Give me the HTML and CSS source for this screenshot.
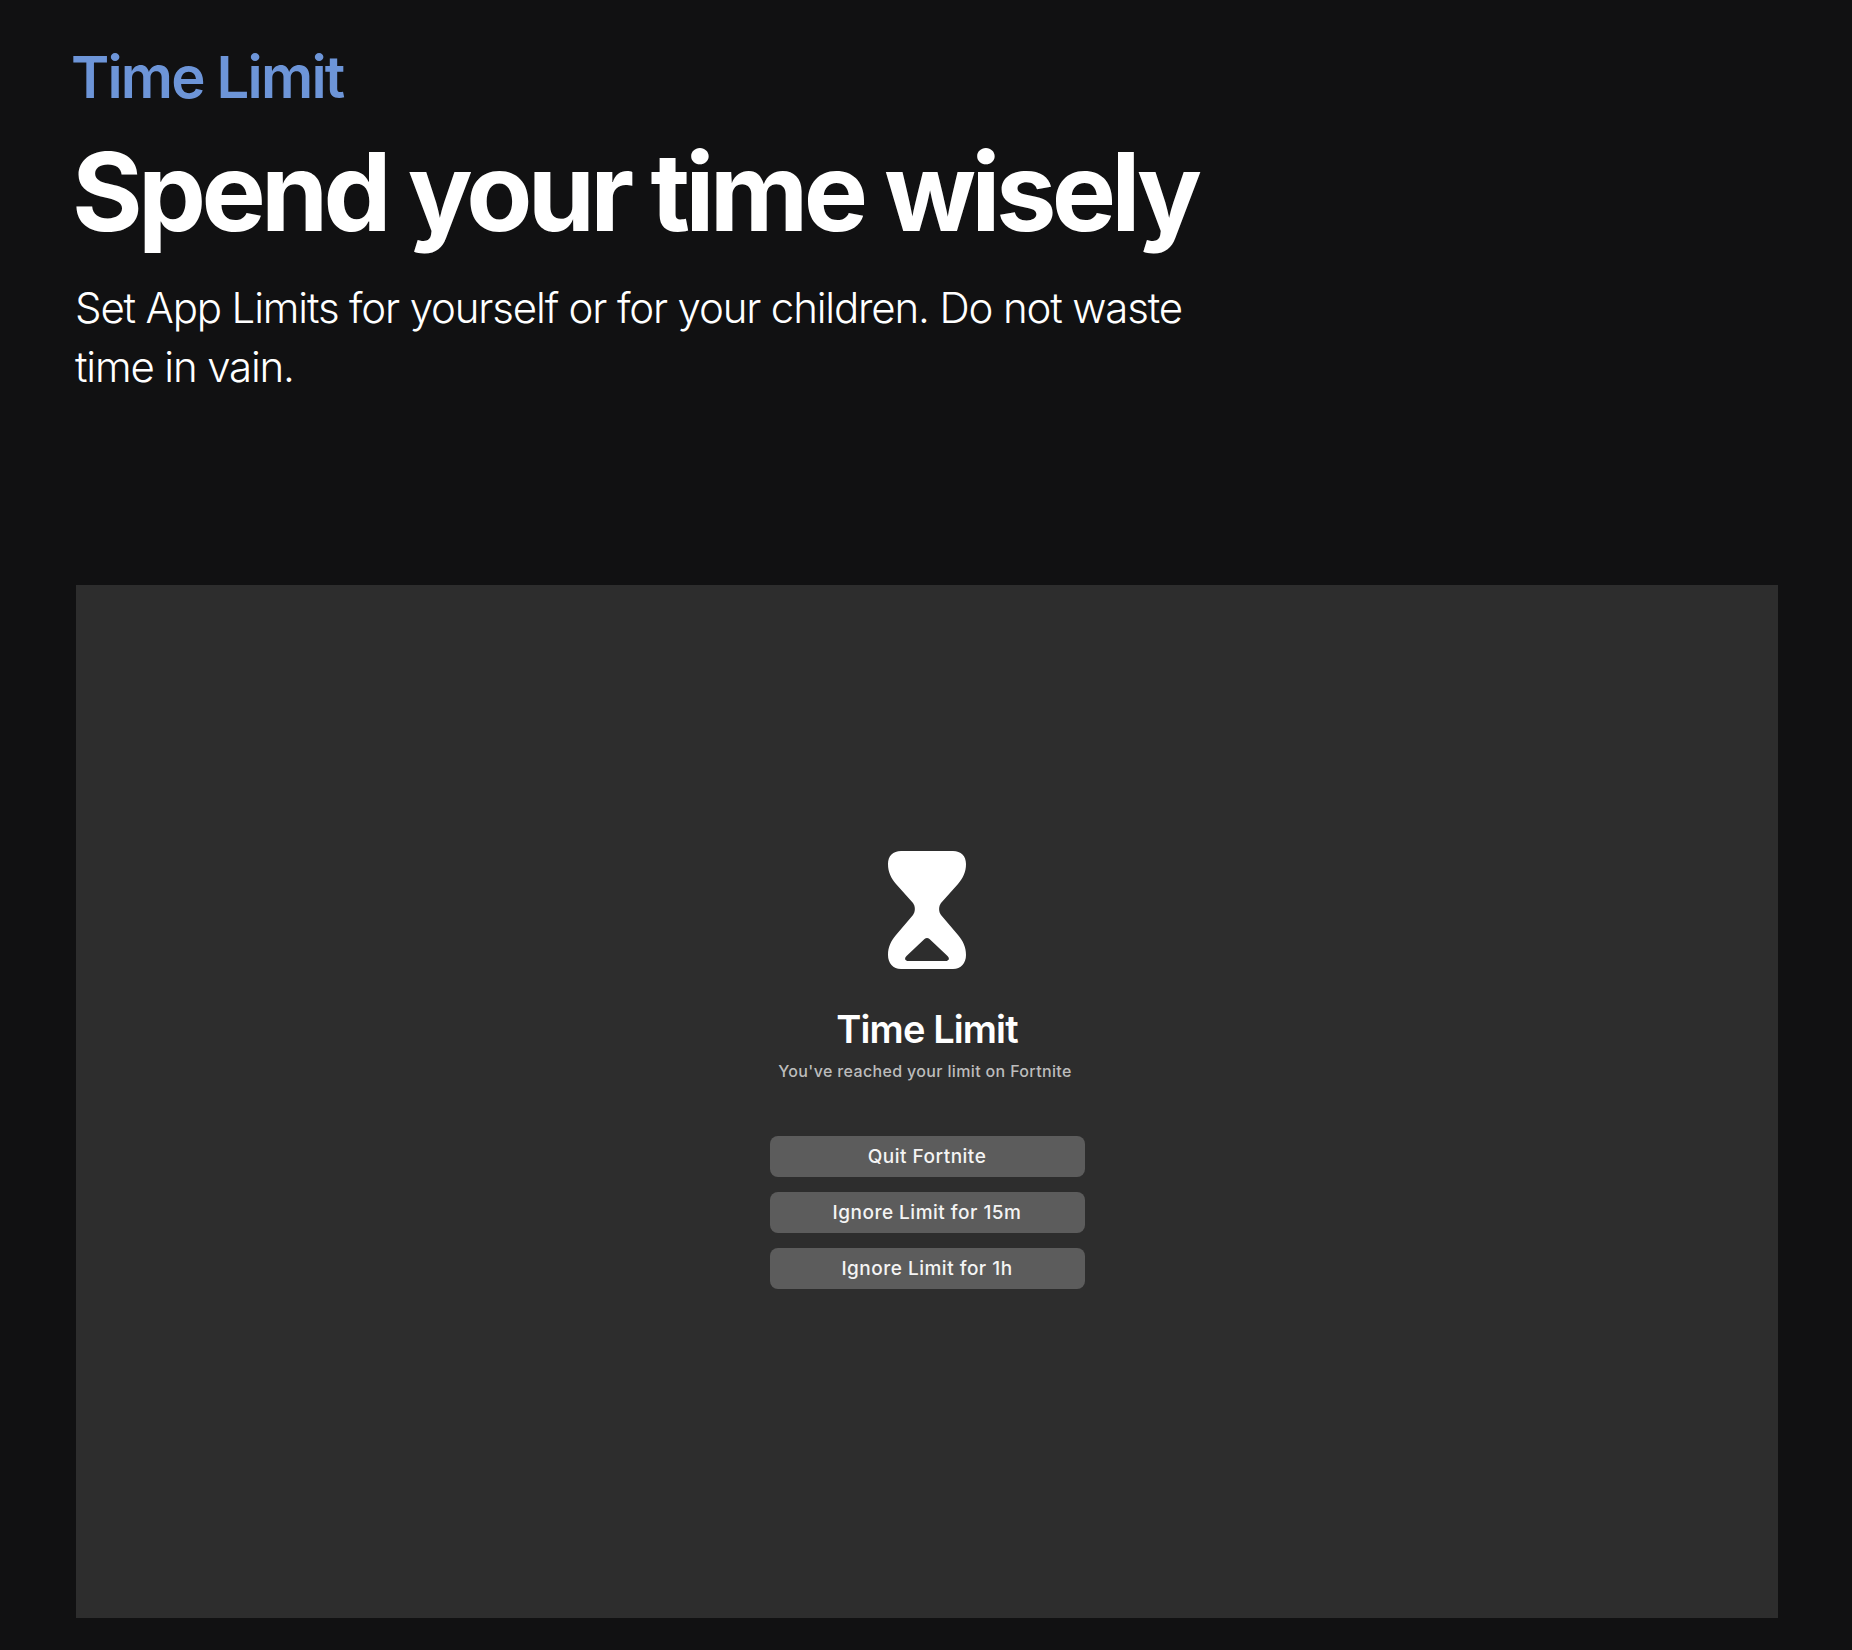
FILE: index.html
```html
<!DOCTYPE html>
<html lang="en">
<head>
<meta charset="utf-8">
<title>Time Limit</title>
<link rel="stylesheet" href="styles.css">
</head>
<body>
<main class="page">
  <header class="intro">
    <h2 class="eyebrow">Time Limit</h2>
    <h1 class="headline">Spend your time wisely</h1>
    <p class="lede">Set App Limits for yourself or for your children. Do not waste time in vain.</p>
  </header>
  <section class="panel">
    <svg class="hourglass" viewBox="0 0 78 118" aria-hidden="true">
      <path fill-rule="evenodd" d="M13 0H65C73 0 78 5 78 13C78 21 75 27 70 33L53 52C50.500 55.500 50.500 60.500 53 64L70 84C75 90 78 96 78 104C78 112 73 118 65 118H13C5 118 0 112 0 104C0 96 3 90 8 84L25 64C27.500 60.500 27.500 55.500 25 52L8 33C3 27 0 21 0 13C0 5 5 0 13 0ZM36.500 88L18.500 105C16 107.500 17 110 20.500 110H57.500C61 110 62 107.500 59.500 105L41.500 88C40 86.500 38 86.500 36.500 88Z"/>
    </svg>
    <h3 class="dialog-title">Time Limit</h3>
    <p class="dialog-text">You've reached your limit on Fortnite</p>
    <div class="actions">
      <button class="action">Quit Fortnite</button>
      <button class="action">Ignore Limit for 15m</button>
      <button class="action">Ignore Limit for 1h</button>
    </div>
  </section>
</main>
</body>
</html>
```
FILE: styles.css
```css
html, body { margin: 0; padding: 0; }
body {
  background: #111112;
  color: #fff;
  font-family: Inter, "Liberation Sans", sans-serif;
}
.page {
  height: 1650px;
  box-sizing: border-box;
  padding: 0 74px 32px 76px;
  display: flex;
  flex-direction: column;
}
.intro { height: 585px; }
.eyebrow {
  margin: 0 0 0 -5px;
  padding-top: 43px;
  font-size: 58px;
  line-height: 68px;
  font-weight: 600;
  letter-spacing: -1.800px;
  color: #6d95d8;
}
.headline {
  margin: 21px 0 0 -4px;
  font-size: 108px;
  line-height: 120px;
  font-weight: 700;
  letter-spacing: -4.700px;
}
.lede {
  margin: 26px 0 0 -1px;
  width: 1130px;
  font-size: 42px;
  line-height: 59px;
  font-weight: 300;
  letter-spacing: -1.160px;
}
.panel {
  flex: 1;
  background: #2d2d2d;
  display: flex;
  flex-direction: column;
  align-items: center;
  padding-top: 266px;
}
.hourglass { width: 78px; height: 118px; margin-right: 1px; fill: #fff; display: block; }
.dialog-title {
  margin: 36px 0 0;
  font-size: 38px;
  line-height: 48px;
  font-weight: 600;
  letter-spacing: -0.900px;
}
.dialog-text {
  margin: 7px 4px 0 0;
  font-size: 16px;
  line-height: 22px;
  font-weight: 500;
  color: #bcbcbc;
  letter-spacing: 0.350px;
}
.actions {
  margin-top: 54px;
  width: 315px;
  display: flex;
  flex-direction: column;
  gap: 15px;
}
.action {
  height: 41px;
  border: 0;
  border-radius: 8px;
  background: #5c5c5c;
  color: #f4f4f4;
  font-family: inherit;
  font-size: 19px;
  font-weight: 500;
  letter-spacing: 0.500px;
  padding: 0;
}
```
